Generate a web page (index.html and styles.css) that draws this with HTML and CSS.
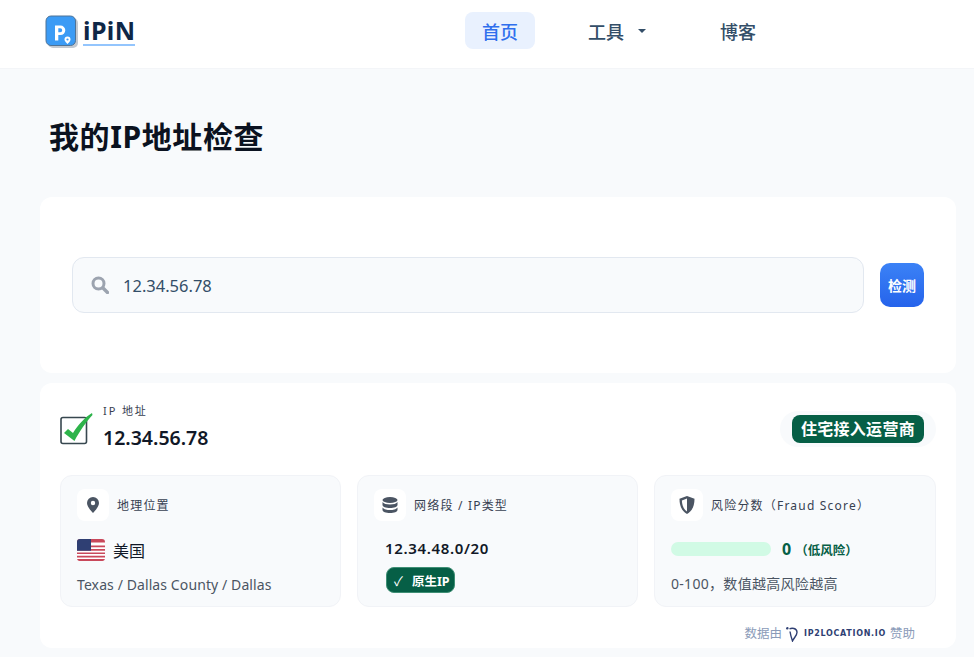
FILE: index.html
```html
<!DOCTYPE html>
<html lang="zh-CN">
<head>
    <meta charset="UTF-8">
    <meta name="viewport" content="width=device-width, initial-scale=1.0">
    <title>我的IP地址检查</title>
    <link rel="stylesheet" href="styles.css">
</head>
<body>
    <header class="topbar">
        <a class="logo" href="#">
            <svg class="logo-mark" width="34" height="34" viewBox="0 0 34 34">
                <rect x="3" y="3" width="30" height="30" rx="5" fill="#c3c9d1"/>
                <rect x="1" y="1" width="29.5" height="29.5" rx="5" fill="#3b9bf5" stroke="#4f7396"/>
                <path d="M10 10.500h5.500a4.800 4.800 0 0 1 0 9.600h-2.200v5.400H10z M13.300 13.300v4h1.900a2 2 0 0 0 0-4z" fill="#fff" fill-rule="evenodd"/>
                <path d="M22.500 21.500a3 3 0 0 1 3 3c0 1.800-3 4.500-3 4.500s-3-2.700-3-4.500a3 3 0 0 1 3-3z" fill="#fff"/>
                <circle cx="22.500" cy="24.500" r="1.100" fill="#3b9bf5"/>
            </svg>
            <span class="logo-text">iPiN</span>
        </a>
        <nav class="nav">
            <a class="nav-item active" href="#">首页</a>
            <a class="nav-item" href="#">工具<span class="caret"></span></a>
            <a class="nav-item" href="#">博客</a>
        </nav>
    </header>

    <main class="page">
        <h1>我的IP地址检查</h1>

        <section class="card search-card">
            <div class="search-box">
                <svg width="18" height="18" viewBox="0 0 18 18" fill="none" stroke="#9ca3af">
                    <circle cx="7.500" cy="7.500" r="5.500" stroke-width="3"/>
                    <path d="M12 12l4.500 4.500" stroke-width="3.400" stroke-linecap="round"/>
                </svg>
                <span class="search-value">12.34.56.78</span>
            </div>
            <button class="check-btn">检测</button>
        </section>

        <section class="card result-card">
            <div class="result-head">
                <div class="result-ip">
                    <svg class="ip-check" width="34" height="34" viewBox="0 0 34 34" fill="none">
                        <rect x="1" y="5.500" width="25.500" height="26" rx="2" fill="#fff" stroke="#37474f" stroke-width="1.600"/>
                        <path d="M4 21l4-4 5 4C18 13 24 6 32 1l.5 2C26 10 19 20 14.500 29z" fill="#2db34a"/>
                    </svg>
                    <div>
                        <div class="ip-label">IP 地址</div>
                        <div class="ip-value">12.34.56.78</div>
                    </div>
                </div>
                <div class="isp-wrap"><span class="isp-tag">住宅接入运营商</span></div>
            </div>

            <div class="info-grid">
                <div class="info-card">
                    <div class="info-title">
                        <span class="info-icon">
                            <svg width="14" height="16" viewBox="0 0 14 16"><path d="M7 0a6 6 0 0 1 6 6c0 3.500-4 8-6 10C5 14 1 9.500 1 6a6 6 0 0 1 6-6zm0 3.800a2.200 2.200 0 1 0 0 4.400 2.200 2.200 0 0 0 0-4.400z" fill="#4b5563" fill-rule="evenodd"/></svg>
                        </span>
                        地理位置
                    </div>
                    <div class="country">
                        <svg class="flag" width="28" height="22" viewBox="0 0 28 22">
                            <rect width="28" height="22" rx="3" fill="#fff"/>
                            <path d="M0 3a3 3 0 0 1 3-3h22a3 3 0 0 1 3 3v.400H0zM0 6.600h28v1.700H0zM0 10h28v1.700H0zM0 13.400h28v1.700H0zM0 16.800h28v1.700H0zM0 20h28a3 3 0 0 1-3 2H3a3 3 0 0 1-3-2z" fill="#c9485b"/>
                            <path d="M3 0h11v11.700H0V3a3 3 0 0 1 3-3z" fill="#2f3f73"/>
                        </svg>
                        <span>美国</span>
                    </div>
                    <div class="info-note">Texas / Dallas County / Dallas</div>
                </div>

                <div class="info-card">
                    <div class="info-title">
                        <span class="info-icon">
                            <svg width="16" height="16" viewBox="0 0 16 16" fill="#4b5563">
                                <ellipse cx="8" cy="3" rx="7.500" ry="3"/>
                                <path d="M.5 5c1 1.700 4 2.500 7.500 2.500S14.500 6.700 15.500 5v3c0 1.700-3.400 3-7.500 3S.5 9.700.5 8z"/>
                                <path d="M.5 10.500c1 1.700 4 2.500 7.500 2.500s6.500-.8 7.500-2.500V13c0 1.700-3.400 3-7.500 3s-7.500-1.300-7.500-3z"/>
                            </svg>
                        </span>
                        网络段 / IP类型
                    </div>
                    <div class="net-body">
                        <div class="net-value">12.34.48.0/20</div>
                        <span class="native-tag"><span class="native-check">✓</span>原生IP</span>
                    </div>
                </div>

                <div class="info-card">
                    <div class="info-title">
                        <span class="info-icon">
                            <svg width="16" height="18" viewBox="0 0 16 18"><path d="M8 0l7.500 2.800c0 6.500-1.800 12-7.500 15.200C2.300 14.800.5 9.300.5 2.800z" fill="#4b5563"/><path d="M8 2.500v13c-3.800-2.600-5-6.700-5.100-11z" fill="#fff"/></svg>
                        </span>
                        风险分数（Fraud Score）
                    </div>
                    <div class="score-row">
                        <div class="score-bar"></div>
                        <span class="score-num">0</span>
                        <span class="score-level">（低风险）</span>
                    </div>
                    <div class="info-note score-note">0-100，数值越高风险越高</div>
                </div>
            </div>

            <div class="sponsor">
                数据由
                <svg width="14" height="15" viewBox="0 0 14 15" fill="none" stroke="#2f3f73" stroke-width="1.400"><path d="M3.500 1.800C6 .8 10.500 1 11 5c.3 3-2.500 5-4.500 9C5.500 11 4.500 8 4 4.500"/><circle cx="1.300" cy="1.300" r=".6"/></svg>
                <span class="sponsor-name">IP2LOCATION.IO</span>
                赞助
            </div>
        </section>
    </main>
</body>
</html>
```

FILE: styles.css
```css
* {
    box-sizing: border-box;
}
body {
    margin: 0;
    background-color: #f8fafc;
    color: #111827;
    font-family: "Noto Sans", "Noto Sans CJK SC", sans-serif;
}
a {
    text-decoration: none;
}
.topbar {
    height: 69px;
    background-color: #fff;
    border-bottom: 1px solid #f3f5f8;
    display: flex;
    align-items: center;
    padding: 0 0 5px 45px;
}
.logo {
    display: flex;
    align-items: center;
    gap: 4px;
    width: 420px;
}
.logo-text {
    font-size: 25px;
    font-weight: 700;
    line-height: 27px;
    letter-spacing: 0.4px;
    color: #0f2747;
    border-bottom: 2px solid #93c5fd;
}
.nav {
    display: flex;
    align-items: center;
    margin-bottom: 2px;
}
.nav-item {
    display: flex;
    align-items: center;
    height: 37px;
    padding: 0 17px;
    margin-right: 37px;
    border-radius: 8px;
    font-size: 18px;
    font-weight: 500;
    color: #334e68;
}
.nav-item.active {
    background-color: #e9f1fe;
    color: #2f6fed;
    margin-right: 36px;
}
.caret {
    margin: 0 3px 0 14px;
    border-left: 4px solid transparent;
    border-right: 4px solid transparent;
    border-top: 4px solid #334e68;
}
.page {
    padding: 0 18px 9px 40px;
}
h1 {
    margin: 0;
    padding: 48px 0 40px 9px;
    font-size: 30px;
    line-height: 40px;
    letter-spacing: 0.6px;
    font-weight: 700;
    color: #0b1220;
}
.card {
    background-color: #fff;
    border-radius: 12px;
}
.search-card {
    height: 176px;
    padding: 0 32px;
    display: flex;
    align-items: center;
    gap: 16px;
}
.search-box {
    flex: 1;
    height: 56px;
    display: flex;
    align-items: center;
    gap: 14px;
    padding-left: 18px;
    background-color: #f8fafc;
    border: 1px solid #e2e8f0;
    border-radius: 12px;
}
.search-value {
    font-size: 16.5px;
    color: #334e68;
}
.check-btn {
    width: 44px;
    height: 44px;
    padding: 0;
    border: none;
    border-radius: 10px;
    background: linear-gradient(180deg, #3b82f6, #2563eb);
    color: #fff;
    font-family: inherit;
    font-size: 14px;
    font-weight: 700;
}
.result-card {
    margin-top: 10px;
    height: 265px;
    padding: 20px 20px 0;
}
.result-head {
    display: flex;
    justify-content: space-between;
    align-items: flex-start;
    height: 72px;
}
.result-ip {
    display: flex;
    align-items: flex-start;
    gap: 9px;
}
.ip-check {
    margin-top: 9px;
}
.ip-label {
    font-size: 11px;
    line-height: 16px;
    letter-spacing: 1.9px;
    color: #374151;
}
.ip-value {
    margin-top: 6px;
    font-size: 19.5px;
    line-height: 26px;
    font-weight: 600;
}
.isp-wrap {
    margin-top: 8px;
    padding: 4px 12px;
    background-color: #f8fafc;
    border-radius: 18px;
}
.isp-tag {
    display: block;
    padding: 0 9px;
    height: 28px;
    line-height: 28px;
    letter-spacing: 0.3px;
    border-radius: 8px;
    background-color: #065f46;
    color: #fff;
    font-size: 16px;
    font-weight: 700;
}
.info-grid {
    display: grid;
    grid-template-columns: 281px 281px 1fr;
    gap: 16px;
}
.info-card {
    height: 132px;
    padding: 13px 16px 0;
    background-color: #f8fafc;
    border: 1px solid #f1f3f7;
    border-radius: 12px;
}
.info-title {
    display: flex;
    align-items: center;
    gap: 8px;
    font-size: 12px;
    letter-spacing: 1.2px;
    color: #374151;
}
.info-icon {
    width: 32px;
    height: 32px;
    display: flex;
    align-items: center;
    justify-content: center;
    background-color: #fff;
    border-radius: 8px;
}
.country {
    display: flex;
    align-items: center;
    gap: 8px;
    margin-top: 17px;
    font-size: 16px;
}
.flag {
    display: block;
}
.info-note {
    margin-top: 14px;
    font-size: 14px;
    line-height: 18px;
    letter-spacing: 0.1px;
    color: #4b5563;
}
.net-body {
    padding: 17px 0 0 11px;
}
.net-value {
    font-size: 15px;
    line-height: 20px;
    font-weight: 600;
    letter-spacing: 0.65px;
}
.native-tag {
    display: inline-flex;
    align-items: center;
    height: 26px;
    margin: 9px 0 0 1px;
    padding: 0 4px 0 7px;
    border: 1px solid #3f8f75;
    border-radius: 8px;
    background-color: #065f46;
    color: #fff;
    font-size: 12.5px;
    font-weight: 700;
}
.native-check {
    margin-right: 9px;
    font-size: 13px;
    font-weight: 400;
}
.score-row {
    display: flex;
    align-items: center;
    margin-top: 18px;
    height: 20px;
}
.score-bar {
    width: 100px;
    height: 14px;
    border-radius: 7px;
    background-color: #d1fae5;
}
.score-num {
    margin-left: 11px;
    font-size: 16px;
    font-weight: 700;
    color: #065f46;
}
.score-level {
    margin-left: 4px;
    font-size: 12.5px;
    font-weight: 600;
    color: #065f46;
}
.score-note {
    margin-top: 16px;
    letter-spacing: 0.3px;
}
.sponsor {
    display: flex;
    align-items: center;
    justify-content: flex-end;
    gap: 4px;
    margin-top: 19px;
    padding-right: 21px;
    font-size: 12.5px;
    line-height: 16px;
    color: #8a9bb8;
}
.sponsor-name {
    font-family: "DejaVu Sans", sans-serif;
    font-size: 8px;
    font-weight: 700;
    letter-spacing: 0.7px;
    color: #2f3f73;
}
```
